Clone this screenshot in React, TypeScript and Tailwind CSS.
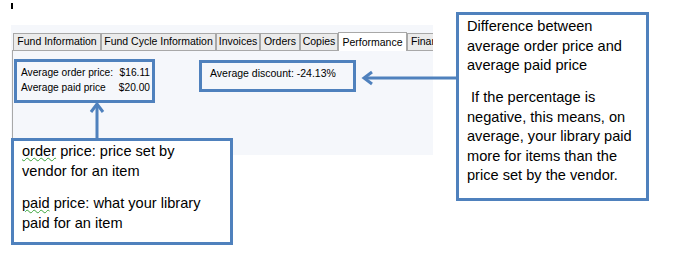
import React from "react";

const tabs = [
  { label: "Fund Information", w: "w-[88px]" },
  { label: "Fund Cycle Information", w: "w-[115px]" },
  { label: "Invoices", w: "w-[44px]" },
  { label: "Orders", w: "w-[40px]" },
  { label: "Copies", w: "w-[38px]" },
];

export default function App() {
  return (
    <div className="relative w-[675px] h-[261px] bg-white overflow-hidden" style={{ fontFamily: '"Liberation Sans", Arial, sans-serif' }}>
      <div className="absolute left-[11px] top-[3px] w-[2px] h-[6px] bg-black" />
      <div className="pt-[25px] pl-[11px]">
        <div className="w-[422px] h-[130px] bg-[#f5f7fb] pt-[6px] overflow-hidden text-[10.5px] text-black">
          <div className="flex items-end h-[19px] pl-[2px] relative z-10">
            {tabs.map((t) => (
              <div
                key={t.label}
                className={`${t.w} h-[17px] shrink-0 flex items-center justify-center border border-[#a8a8a8] border-b-0 bg-[#ebebeb] whitespace-nowrap`}
              >
                {t.label}
              </div>
            ))}
            <div className="w-[69px] h-[19px] shrink-0 flex items-start pt-[2px] justify-center border border-[#a8a8a8] border-b-0 bg-white whitespace-nowrap mb-[-1px]">
              Performance
            </div>
            <div className="w-[40px] h-[17px] shrink-0 flex items-center pl-[3px] border border-[#a8a8a8] border-b-0 bg-[#ebebeb] whitespace-nowrap overflow-hidden">
              Finar
            </div>
          </div>
          <div className="ml-[1px] h-full border-l border-t border-[#a8a8a8] pt-[8px] pl-[1px]">
            <div className="flex items-start">
              <div className="w-[141px] h-[44px] border-[3px] border-[#4f81bd] pl-[4px] pt-[3px] leading-[15px] text-[10.2px]">
                <div className="grid grid-cols-[auto_auto] gap-x-[3px] w-[129px] justify-between">
                  <span>Average order price:</span>
                  <span className="text-right">$16.11</span>
                  <span>Average paid price</span>
                  <span className="text-right">$20.00</span>
                </div>
              </div>
              <div className="ml-[44px] mt-[1px] w-[157px] h-[32px] border-[3px] border-[#4f81bd] pl-[8px] pt-[3px] leading-[15px]">
                Average discount: -24.13%
              </div>
            </div>
          </div>
        </div>
      </div>

      <svg className="absolute left-0 top-0" width="675" height="261">
        <line x1="97" y1="105" x2="97" y2="138" stroke="#4f81bd" strokeWidth="3" />
        <polyline points="91,112 97,104 103,112" fill="none" stroke="#4f81bd" strokeWidth="3" />
        <line x1="364" y1="78" x2="456" y2="78" stroke="#4f81bd" strokeWidth="3" />
        <polyline points="372,72 364,78 372,84" fill="none" stroke="#4f81bd" strokeWidth="3" />
      </svg>

      <div className="absolute left-[456px] top-[12px] w-[193px] h-[189px] border-[3px] border-[#4f81bd] bg-white pl-[8px] pt-[2px] text-[14.6px] leading-[19.5px] text-black">
        <p>Difference between average order price and average paid price</p>
        <p className="mt-[12.5px]">&nbsp;If the percentage is negative, this means, on average, your library paid more for items than the price set by the vendor.</p>
      </div>

      <div className="absolute left-[11px] top-[138px] w-[222px] h-[107px] border-[3px] border-[#4f81bd] bg-white pl-[8px] pt-[1px] text-[14.6px] leading-[19.5px] text-black">
        <p className="w-[190px]">
          <span className="underline decoration-wavy decoration-[#3aa33a] decoration-1 underline-offset-1">order</span> price: price set by vendor for an item
        </p>
        <p className="mt-[13px] w-[190px]">
          <span className="underline decoration-wavy decoration-[#3aa33a] decoration-1 underline-offset-1">paid</span> price: what your library paid for an item
        </p>
      </div>
    </div>
  );
}
